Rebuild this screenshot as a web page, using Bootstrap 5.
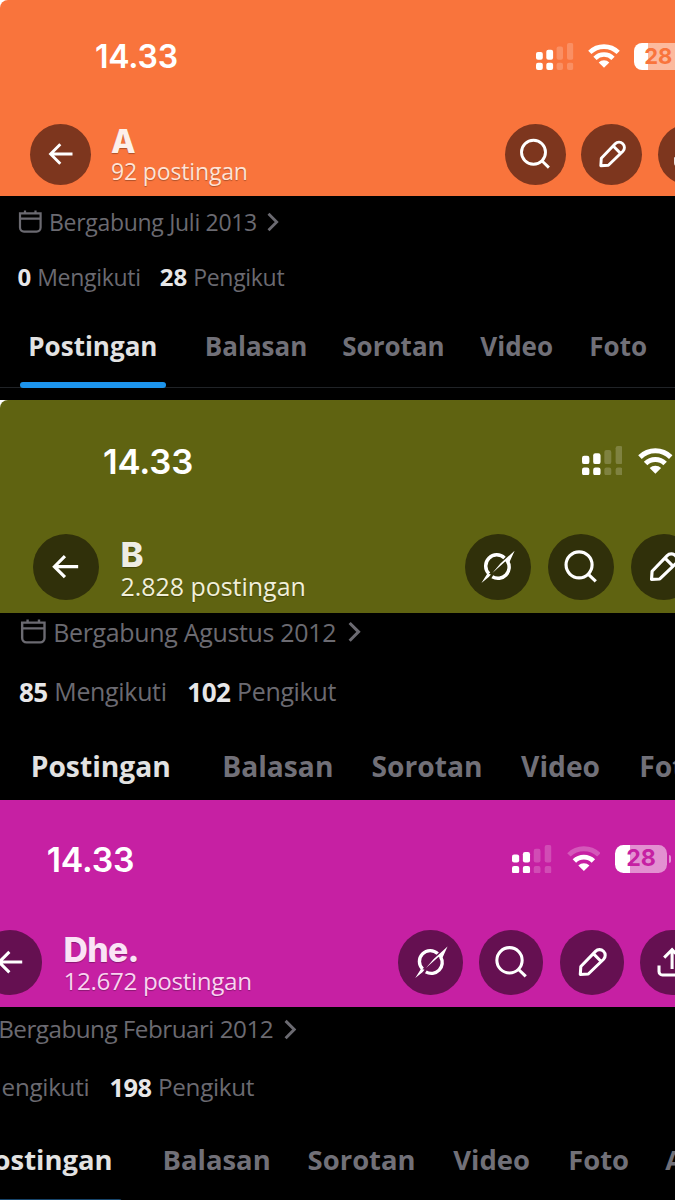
<!DOCTYPE html>
<html lang="id">
<head>
<meta charset="utf-8">
<meta name="viewport" content="width=device-width, initial-scale=1">
<title>Profil</title>
<link href="https://cdn.jsdelivr.net/npm/bootstrap@5.3.0/dist/css/bootstrap.min.css" rel="stylesheet">
<style>
  body { width: 675px; height: 1200px; background: #000; font-family: "Open Sans", sans-serif; }
  /* every screen shares one layout, scaled by --u */
  .screen { height: 400px; background: #000; }
  .phone { width: calc(var(--u) * 749); margin-left: var(--shift, 0px); margin-top: var(--lift, 0px); }
  .banner { background: var(--tone); }
  .corner { background: linear-gradient(#fff 12px, #000 12px); }
  .corner .banner { border-top-left-radius: 8px; }
  .s-a { --u: 1px; --tone: #f9743c; --disc: #7d361e; --soft: #ffe3d6; --name: #fdf0ea; --d: 26; }
  .s-b { --u: 1.085px; --tone: #5f6311; --disc: #30300a; --soft: #f1efd9; --name: #eeede4; --d: 18; --ls-num: -.5px; --ls-sub: 0px; }
  .s-c { --u: 1.055px; --shift: -53.5px; --tone: #c620a3; --disc: #651051; --soft: #fad3f1; --name: #fbe3f6; --d: 21.6; --far: .25;
    --ls-name: -.7px; --ls-sub: -.38px; --ls-join: -.52px; --ls-num: -.4px; }
  .status { height: calc(var(--u) * 112); padding: 0 calc(var(--u) * 62) 0 calc(var(--u) * 95); }
  .clock { font: 600 calc(var(--u) * 32)/1 Inter, sans-serif; color: #fff; padding-top: calc(var(--u) * 1.2); letter-spacing: -.2px; }
  .sys { gap: calc(var(--u) * 14.2); }
  svg { display: block; flex: none; }
  .sig { width: calc(var(--u) * 37.4); height: calc(var(--u) * 27); }
  .wifi { width: calc(var(--u) * 32); height: calc(var(--u) * 24); }
  .batt { width: calc(var(--u) * 48.6); height: calc(var(--u) * 27); border-radius: calc(var(--u) * 8);
    background: linear-gradient(90deg, #fff 28%, rgba(255,255,255,.5) 28%);
    font: 700 calc(var(--u) * 22)/1 Inter, sans-serif; color: var(--tone); }
  .knob { width: calc(var(--u) * 2.6); height: calc(var(--u) * 8); margin-left: calc(var(--u) * 1.8); border-radius: 0 4px 4px 0; background: rgba(255,255,255,.5); }
  .topnav { height: calc(var(--u) * 84); padding: 0 calc(var(--u) * 30.5) 0 calc(var(--u) * 30); }
  .disc { flex: none; width: calc(var(--u) * 61); height: calc(var(--u) * 61); border-radius: 50%; background: var(--disc); }
  .disc svg { width: calc(var(--u) * 40); height: calc(var(--u) * 40); fill: none; stroke: #fff; stroke-width: 2.9; }
  .tools { gap: calc(var(--u) * 15.4); }
  .who { margin-left: calc(var(--u) * 20); padding-top: calc(var(--u) * 4.5); text-shadow: 0 1px 1px rgba(0,0,0,.3); white-space: nowrap; }
  .who-name { font-family: Inter, sans-serif; font-size: calc(var(--u) * 32); line-height: calc(var(--u) * 30); font-weight: 800; color: var(--name); letter-spacing: var(--ls-name, 0); }
  .who-sub { font-size: calc(var(--u) * 23); line-height: calc(var(--u) * 28); color: var(--soft); letter-spacing: var(--ls-sub, -.15px); }
  .body-part { background: #000; padding-top: calc(var(--u) * (var(--d) - 18)); }
  .line { height: calc(var(--u) * 36); font-size: calc(var(--u) * 23); line-height: 1; color: #6b6a71; white-space: nowrap; padding-left: calc(var(--u) * 18); letter-spacing: -.3px; }
  .line svg { fill: none; stroke: currentColor; }
  .cal { width: calc(var(--u) * 24); height: calc(var(--u) * 24); stroke-width: 2.2; }
  .next { width: calc(var(--u) * 12); height: calc(var(--u) * 20); margin-left: calc(var(--u) * 10.5); stroke-width: 2.8; }
  .joined { margin-left: calc(var(--u) * 7); letter-spacing: var(--ls-join, -.3px); }
  .follows { margin-top: calc(var(--u) * 19); padding-left: calc(var(--u) * 17.5); }
  .s-c .follows { padding-left: calc(var(--u) * 12.5); }
  .follows b { color: #e7e7e8; font-weight: 700; font-size: calc(var(--u) * 24); letter-spacing: var(--ls-num, 0); }
  .follows span { margin-left: calc(var(--u) * 6); }
  .follows span + b { margin-left: calc(var(--u) * 19); }
  .tabs-row { margin-top: calc(var(--u) * 9); height: calc(var(--u) * 84); padding-left: calc(var(--u) * 28.3); border-bottom: 1px solid #202327;
    font-size: calc(var(--u) * 26); line-height: 1; font-weight: 700; color: #717078; }
  .tab { flex: none; height: 100%; }
  .tab.on { color: #e2e2e2; }
  .tab.on::after { content: ""; position: absolute; left: calc(var(--u) * -8); bottom: -1px; width: calc(var(--u) * 146); height: calc(var(--u) * 6); border-radius: 3px; background: #1d94ec; }
  .s-c .tab.on::after { bottom: -2px; background: #17456b; }
  .t1 { width: calc(var(--u) * 176.5); } .t2 { width: calc(var(--u) * 137.5); } .t3 { width: calc(var(--u) * 138); }
  .t4 { width: calc(var(--u) * 109); } .t5 { width: calc(var(--u) * 92); }
</style>
</head>
<body class="overflow-hidden m-0">
<svg width="0" height="0" class="position-absolute">
  <symbol id="i-back" viewBox="-20 -20 40 40"><path d="M11.5 0H-10.3M-.7-9.7-10.4 0l9.7 9.7"/></symbol>
  <symbol id="i-search" viewBox="-20 -20 40 40"><circle cx="-1.5" cy="-1.7" r="12"/><path d="M7.1 7l6.8 6.6"/></symbol>
  <symbol id="i-pen" viewBox="-20 -20 40 40"><path stroke-linejoin="round" d="M-11.2 11.7-10.7 4.2 3.2-10.2A5.3 5.3 0 0 1 10.9-2.7L-3.6 11.3ZM1.2-8 8.6-.6"/></symbol>
  <symbol id="i-grok" viewBox="-20 -20 40 40"><path stroke-width="3.2" d="M-8 6.6A10.2 10.2 0 0 1 6.3-8M9-5A10.3 10.3 0 0 1-5 9.3"/><path fill="#fff" stroke="none" d="M-15 15-9.5 6.2-6.2 7.2-8.2 9.6ZM-4.9 5.7 2.5-2.9 15.6-14.8 10.8-4.2 7.4-4.4 7.2-5Z"/></symbol>
  <symbol id="i-share" viewBox="-20 -20 40 40"><path d="M0 6.5V-11.5M-7.5-4.2 0-11.7 7.5-4.2M-12.4 3.2V9a3.2 3.2 0 0 0 3.2 3.2H9.2A3.2 3.2 0 0 0 12.4 9V3.2"/></symbol>
  <symbol id="i-cal" viewBox="0 0 24 24"><path d="M2 3.3H22.6V17.6a4 4 0 0 1-4 4H6a4 4 0 0 1-4-4ZM2 8.6H22.6M7 .4V3M17.5 .4V3"/></symbol>
  <symbol id="i-next" viewBox="0 0 12 20"><path d="M1.5 1.8 9.7 10 1.5 18.2"/></symbol>
  <symbol id="i-signal" viewBox="0 0 37.4 27"><g fill="#fff"><rect y="9" width="6.8" height="7.7" rx="2"/><rect x="10.3" y="6.7" width="6.8" height="10" rx="2"/><rect y="19.8" width="6.8" height="7.2" rx="2"/><rect x="10.3" y="19.8" width="6.8" height="7.2" rx="2"/>
    <g opacity=".2"><rect x="20.6" y="3.6" width="6.4" height="13.1" rx="2"/><rect x="31" width="6.4" height="16.7" rx="2"/><rect x="20.6" y="19.8" width="6.4" height="7.2" rx="2"/><rect x="31" y="19.8" width="6.4" height="7.2" rx="2"/></g></g></symbol>
  <symbol id="i-wifi" viewBox="0 0 32 24"><g fill="none" stroke="#fff" stroke-width="4.6"><path style="opacity:var(--far,1)" d="M1.8 8.4A20.3 20.3 0 0 1 30.2 8.4"/><path d="M7 14.3a12.7 12.7 0 0 1 18 0"/></g><path fill="#fff" d="M10.7 18.5a7.5 7.5 0 0 1 10.6 0L16 23.8Z"/></symbol>
</svg>

<section class="screen overflow-hidden corner s-a">
  <div class="phone">
    <div class="banner">
      <div class="status d-flex align-items-center justify-content-between">
        <span class="clock">14.33</span>
        <div class="sys d-flex align-items-center">
          <svg class="sig"><use href="#i-signal"/></svg>
          <svg class="wifi"><use href="#i-wifi"/></svg>
          <div class="d-flex align-items-center"><span class="batt d-flex align-items-center justify-content-center">28</span><i class="knob"></i></div>
        </div>
      </div>
      <div class="topnav d-flex align-items-center">
        <span class="disc d-grid"><svg class="m-auto"><use href="#i-back"/></svg></span>
        <div class="who"><div class="who-name">A</div><div class="who-sub">92 postingan</div></div>
        <div class="tools d-flex ms-auto">
          <span class="disc d-grid"><svg class="m-auto"><use href="#i-search"/></svg></span>
          <span class="disc d-grid"><svg class="m-auto"><use href="#i-pen"/></svg></span>
          <span class="disc d-grid"><svg class="m-auto"><use href="#i-share"/></svg></span>
        </div>
      </div>
    </div>
    <div class="body-part">
      <div class="line d-flex align-items-center"><svg class="cal"><use href="#i-cal"/></svg><span class="joined">Bergabung Juli 2013</span><svg class="next"><use href="#i-next"/></svg></div>
      <div class="line follows d-flex align-items-center"><b>0</b><span>Mengikuti</span><b>28</b><span>Pengikut</span></div>
      <div class="tabs-row d-flex">
        <div class="tab on t1 position-relative d-flex align-items-center">Postingan</div>
        <div class="tab t2 d-flex align-items-center">Balasan</div>
        <div class="tab t3 d-flex align-items-center">Sorotan</div>
        <div class="tab t4 d-flex align-items-center">Video</div>
        <div class="tab t5 d-flex align-items-center">Foto</div>
      </div>
    </div>
  </div>
</section>

<section class="screen overflow-hidden corner s-b">
  <div class="phone">
    <div class="banner">
      <div class="status d-flex align-items-center justify-content-between">
        <span class="clock">14.33</span>
        <div class="sys d-flex align-items-center">
          <svg class="sig"><use href="#i-signal"/></svg>
          <svg class="wifi"><use href="#i-wifi"/></svg>
          <div class="d-flex align-items-center"><span class="batt"></span><i class="knob"></i></div>
        </div>
      </div>
      <div class="topnav d-flex align-items-center">
        <span class="disc d-grid"><svg class="m-auto"><use href="#i-back"/></svg></span>
        <div class="who"><div class="who-name">B</div><div class="who-sub">2.828 postingan</div></div>
        <div class="tools d-flex ms-auto">
          <span class="disc d-grid"><svg class="m-auto"><use href="#i-grok"/></svg></span>
          <span class="disc d-grid"><svg class="m-auto"><use href="#i-search"/></svg></span>
          <span class="disc d-grid"><svg class="m-auto"><use href="#i-pen"/></svg></span>
          <span class="disc d-grid"><svg class="m-auto"><use href="#i-share"/></svg></span>
        </div>
      </div>
    </div>
    <div class="body-part">
      <div class="line d-flex align-items-center"><svg class="cal"><use href="#i-cal"/></svg><span class="joined">Bergabung Agustus 2012</span><svg class="next"><use href="#i-next"/></svg></div>
      <div class="line follows d-flex align-items-center"><b>85</b><span>Mengikuti</span><b>102</b><span>Pengikut</span></div>
      <div class="tabs-row d-flex">
        <div class="tab on t1 position-relative d-flex align-items-center">Postingan</div>
        <div class="tab t2 d-flex align-items-center">Balasan</div>
        <div class="tab t3 d-flex align-items-center">Sorotan</div>
        <div class="tab t4 d-flex align-items-center">Video</div>
        <div class="tab t5 d-flex align-items-center">Foto</div>
      </div>
    </div>
  </div>
</section>

<section class="screen overflow-hidden s-c">
  <div class="phone">
    <div class="banner">
      <div class="status d-flex align-items-center justify-content-between">
        <span class="clock">14.33</span>
        <div class="sys d-flex align-items-center">
          <svg class="sig"><use href="#i-signal"/></svg>
          <svg class="wifi"><use href="#i-wifi"/></svg>
          <div class="d-flex align-items-center"><span class="batt d-flex align-items-center justify-content-center">28</span><i class="knob"></i></div>
        </div>
      </div>
      <div class="topnav d-flex align-items-center">
        <span class="disc d-grid"><svg class="m-auto"><use href="#i-back"/></svg></span>
        <div class="who"><div class="who-name">Dhe.</div><div class="who-sub">12.672 postingan</div></div>
        <div class="tools d-flex ms-auto">
          <span class="disc d-grid"><svg class="m-auto"><use href="#i-grok"/></svg></span>
          <span class="disc d-grid"><svg class="m-auto"><use href="#i-search"/></svg></span>
          <span class="disc d-grid"><svg class="m-auto"><use href="#i-pen"/></svg></span>
          <span class="disc d-grid"><svg class="m-auto"><use href="#i-share"/></svg></span>
        </div>
      </div>
    </div>
    <div class="body-part">
      <div class="line d-flex align-items-center"><svg class="cal"><use href="#i-cal"/></svg><span class="joined">Bergabung Februari 2012</span><svg class="next"><use href="#i-next"/></svg></div>
      <div class="line follows d-flex align-items-center"><b>0</b><span>Mengikuti</span><b>198</b><span>Pengikut</span></div>
      <div class="tabs-row d-flex">
        <div class="tab on t1 position-relative d-flex align-items-center">Postingan</div>
        <div class="tab t2 d-flex align-items-center">Balasan</div>
        <div class="tab t3 d-flex align-items-center">Sorotan</div>
        <div class="tab t4 d-flex align-items-center">Video</div>
        <div class="tab t5 d-flex align-items-center">Foto</div>
        <div class="tab d-flex align-items-center">A</div>
      </div>
    </div>
  </div>
</section>
<script src="https://cdn.jsdelivr.net/npm/bootstrap@5.3.0/dist/js/bootstrap.bundle.min.js"></script>
</body>
</html>
